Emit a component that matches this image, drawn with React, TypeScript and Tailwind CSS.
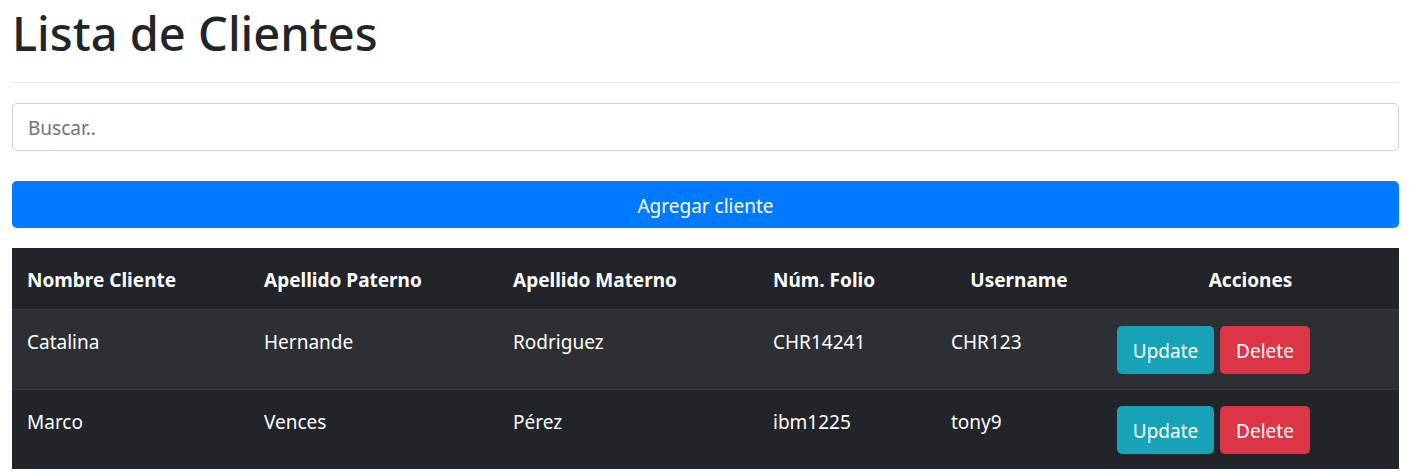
const clientes = [
  { nombre: 'Catalina', paterno: 'Hernande', materno: 'Rodriguez', folio: 'CHR14241', username: 'CHR123' },
  { nombre: 'Marco', paterno: 'Vences', materno: 'Pérez', folio: 'ibm1225', username: 'tony9' },
]

const App = () => {
  return (
    <div className="min-h-screen bg-white pl-3 pr-[10px] text-[#212529] font-['Noto_Sans',sans-serif]">
      <h1 className="pt-[3px] pb-[-3px] h-[60px] text-[47px] font-medium leading-[60px]">Lista de Clientes</h1>
      <hr className="mt-[22px] border-0 border-t border-[#e5e5e5]" />

      <input
        type="text"
        placeholder="Buscar.."
        className="mt-[20px] block h-[48px] w-full rounded-[5px] border border-[#ced4da] px-[15px] pt-[1px] text-[19px] placeholder:text-[#6c757d] outline-none"
      />

      <button className="mt-[30px] block h-[47px] w-full rounded-[5px] bg-[#007bff] pt-[3px] text-[19px] text-white">
        Agregar cliente
      </button>

      <table className="mt-[20px] w-full table-fixed border-collapse bg-[#212529] text-[19px] leading-[30px] text-white">
        <colgroup>
          <col className="w-[237px]" />
          <col className="w-[249px]" />
          <col className="w-[260px]" />
          <col className="w-[178px]" />
          <col className="w-[166px]" />
          <col className="w-[297px]" />
        </colgroup>
        <thead>
          <tr>
            <th className="px-[15px] pt-[17px] pb-[14px] text-left font-bold">Nombre Cliente</th>
            <th className="px-[15px] pt-[17px] pb-[14px] text-left font-bold">Apellido Paterno</th>
            <th className="px-[15px] pt-[17px] pb-[14px] text-left font-bold">Apellido Materno</th>
            <th className="px-[15px] pt-[17px] pb-[14px] text-left font-bold">Núm. Folio</th>
            <th className="px-[15px] pt-[17px] pb-[14px] text-center font-bold">Username</th>
            <th className="px-[15px] pt-[17px] pb-[14px] text-center font-bold">Acciones</th>
          </tr>
        </thead>
        <tbody>
          {clientes.map((c, i) => (
            <tr key={c.folio} className={i % 2 === 0 ? 'bg-[#2c3034]' : 'bg-[#212529]'}>
              <td className="border-t border-[#373b3e] px-[15px] pt-[17px] pb-[14px] align-top">{c.nombre}</td>
              <td className="border-t border-[#373b3e] px-[15px] pt-[17px] pb-[14px] align-top">{c.paterno}</td>
              <td className="border-t border-[#373b3e] px-[15px] pt-[17px] pb-[14px] align-top">{c.materno}</td>
              <td className="border-t border-[#373b3e] px-[15px] pt-[17px] pb-[14px] align-top">{c.folio}</td>
              <td className="border-t border-[#373b3e] px-[15px] pt-[17px] pb-[14px] align-top">{c.username}</td>
              <td className="border-t border-[#373b3e] px-[15px] pt-[16px] pb-[15px] align-top">
                <div className="flex gap-[6px]">
                  <button className="h-[48px] w-[97px] rounded-[5px] bg-[#17a2b8] pt-[2px] text-[19px] text-white">Update</button>
                  <button className="h-[48px] w-[90px] rounded-[5px] bg-[#dc3545] pt-[2px] text-[19px] text-white">Delete</button>
                </div>
              </td>
            </tr>
          ))}
        </tbody>
      </table>
    </div>
  )
}

export default App
